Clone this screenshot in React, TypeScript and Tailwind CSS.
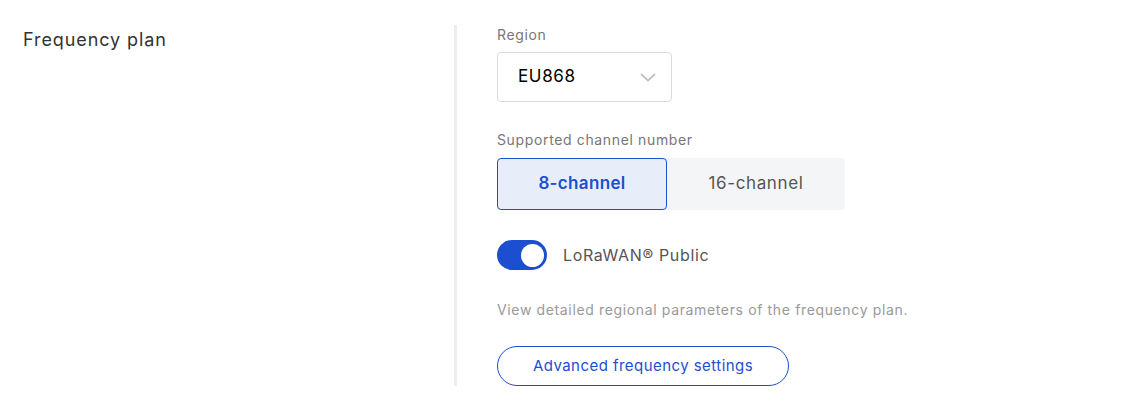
import { useState } from 'react'

function Chevron() {
  return (
    <svg width="16" height="9" viewBox="0 0 16 9" fill="none" className="text-[#c2c2c2]">
      <path d="M1.5 1.5 8 7.5l6.5-6" stroke="currentColor" strokeWidth="1.8" strokeLinecap="round" strokeLinejoin="round" />
    </svg>
  )
}

export default function App() {
  const [channels, setChannels] = useState<8 | 16>(8)
  const [isPublic, setIsPublic] = useState(true)

  return (
    <div className="min-h-[409px] bg-white font-['Inter',sans-serif] tracking-[0.04em]">
      <div className="flex pt-[25px] pl-[23px]">
        <div className="w-[431px] shrink-0 pt-[1px] text-[18px] leading-[28px] tracking-[0.05em] text-[#333]">
          Frequency plan
        </div>
        <div className="w-[3px] shrink-0 bg-[#eeeeee]" />
        <div className="flex flex-col pl-[40px]">
          <div className="text-[14px] leading-[20px] text-[#777]">Region</div>
          <button
            type="button"
            className="mt-[7px] flex h-[50px] w-[175px] items-center justify-between rounded-[4px] border border-[#dcdcdc] pl-[20px] pr-[15px] text-[17px] text-black"
          >
            <span>EU868</span>
            <Chevron />
          </button>

          <div className="mt-[28px] text-[14px] leading-[20px] text-[#777]">Supported channel number</div>
          <div className="mt-[8px] flex h-[52px] w-[348px] rounded-[4px] bg-[#f4f5f7]">
            <button
              type="button"
              onClick={() => setChannels(8)}
              className={
                channels === 8
                  ? 'w-[170px] rounded-[4px] border border-[#1b4fd0] bg-[#e8eef9] text-[17px] font-semibold tracking-[0.02em] text-[#1b4fd0]'
                  : 'w-[170px] rounded-[4px] border border-transparent text-[17px] text-[#555]'
              }
            >
              8-channel
            </button>
            <button
              type="button"
              onClick={() => setChannels(16)}
              className={
                channels === 16
                  ? 'flex-1 rounded-[4px] border border-[#1b4fd0] bg-[#e8eef9] text-[17px] font-semibold tracking-[0.02em] text-[#1b4fd0]'
                  : 'flex-1 rounded-[4px] border border-transparent text-[17px] text-[#555]'
              }
            >
              16-channel
            </button>
          </div>

          <div className="mt-[30px] flex items-center gap-[16px]">
            <button
              type="button"
              onClick={() => setIsPublic(!isPublic)}
              className={
                isPublic
                  ? 'flex h-[30px] w-[50px] items-center justify-end rounded-full bg-[#1b4fd0] px-[3px]'
                  : 'flex h-[30px] w-[50px] items-center justify-start rounded-full bg-[#ccc] px-[3px]'
              }
            >
              <span className="h-[23px] w-[23px] rounded-full bg-white" />
            </button>
            <span className="text-[16px] text-[#555]">LoRaWAN® Public</span>
          </div>

          <div className="mt-[30px] text-[14px] leading-[20px] text-[#999]">
            View detailed regional parameters of the frequency plan.
          </div>
          <button
            type="button"
            className="mt-[26px] h-[40px] w-[292px] rounded-full border border-[#1b4fd0] text-[15px] tracking-[0.03em] text-[#1b4fd0]"
          >
            Advanced frequency settings
          </button>
        </div>
      </div>
    </div>
  )
}
